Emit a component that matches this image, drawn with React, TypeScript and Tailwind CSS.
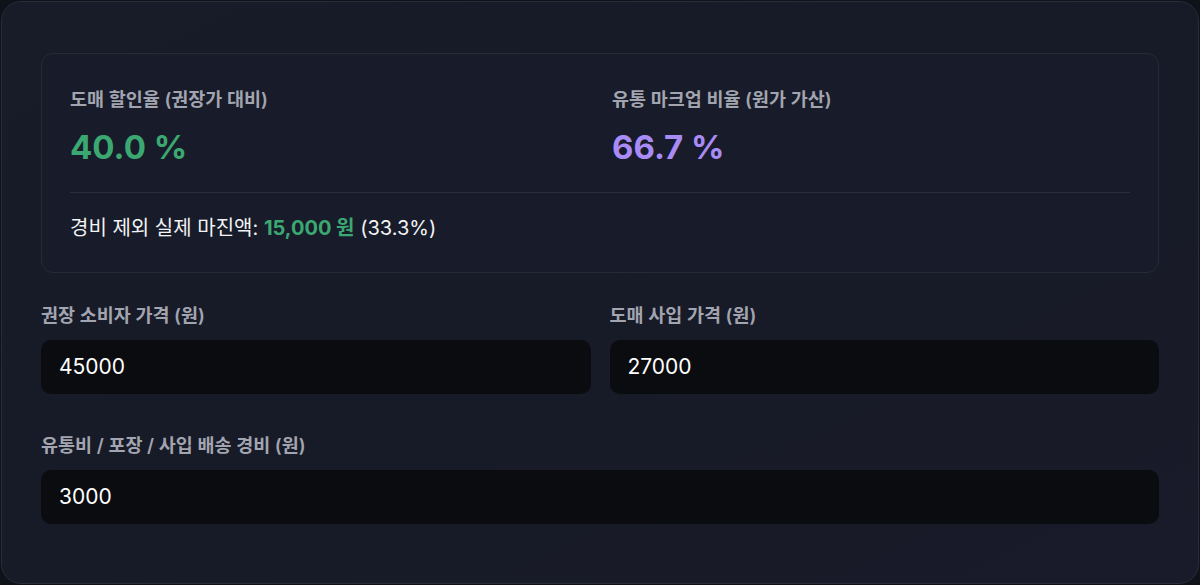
export default function App() {
  const font = { fontFamily: 'Inter, "Noto Sans CJK KR", sans-serif' };
  return (
    <div className="w-[1200px] h-[585px] bg-[#10121a] p-px" style={font}>
      <div className="h-[583px] w-[1198px] rounded-[20px] border border-[#292c39] bg-gradient-to-br from-[#181b28] via-[#171a27] to-[#1a1b2a] px-[39px] pt-[51px]">
        <div className="rounded-[12px] border border-[#262a39] bg-[#181b29] px-[28px] pt-[33px] pb-[31px]">
          <div className="grid grid-cols-2 gap-6">
            <div>
              <div className="text-[18.5px] font-semibold text-[#a2a5b0] leading-[24px]">도매 할인율 (권장가 대비)</div>
              <div className="mt-[16px] text-[33px] font-bold text-[#3ba871] leading-[40px]">40.0 %</div>
            </div>
            <div>
              <div className="text-[18.5px] font-semibold text-[#a2a5b0] leading-[24px]">유통 마크업 비율 (원가 가산)</div>
              <div className="mt-[16px] text-[33px] font-bold text-[#a98bf6] leading-[40px]">66.7 %</div>
            </div>
          </div>
          <div className="mt-[25px] border-t border-[#2a2e3d] pt-[22px] text-[20px] text-[#f2f3f5] leading-[26px]">
            경비 제외 실제 마진액: <span className="font-bold text-[#3ba871]">15,000 원</span> (33.3%)
          </div>
        </div>
        <div className="mt-[30px] grid grid-cols-2 gap-x-[19px]">
          <div>
            <div className="text-[18.5px] font-semibold text-[#a2a5b0] leading-[24px]">권장 소비자 가격 (원)</div>
            <div className="mt-[13px] flex h-[54px] items-center rounded-[10px] bg-[#0b0c10] px-[18px] text-[21px] text-white">45000</div>
          </div>
          <div>
            <div className="text-[18.5px] font-semibold text-[#a2a5b0] leading-[24px]">도매 사입 가격 (원)</div>
            <div className="mt-[13px] flex h-[54px] items-center rounded-[10px] bg-[#0b0c10] px-[18px] text-[21px] text-white">27000</div>
          </div>
        </div>
        <div className="mt-[39px]">
          <div className="text-[18.5px] font-semibold text-[#a2a5b0] leading-[24px]">유통비 / 포장 / 사입 배송 경비 (원)</div>
          <div className="mt-[13px] flex h-[54px] items-center rounded-[10px] bg-[#0b0c10] px-[18px] text-[21px] text-white">3000</div>
        </div>
      </div>
    </div>
  );
}
